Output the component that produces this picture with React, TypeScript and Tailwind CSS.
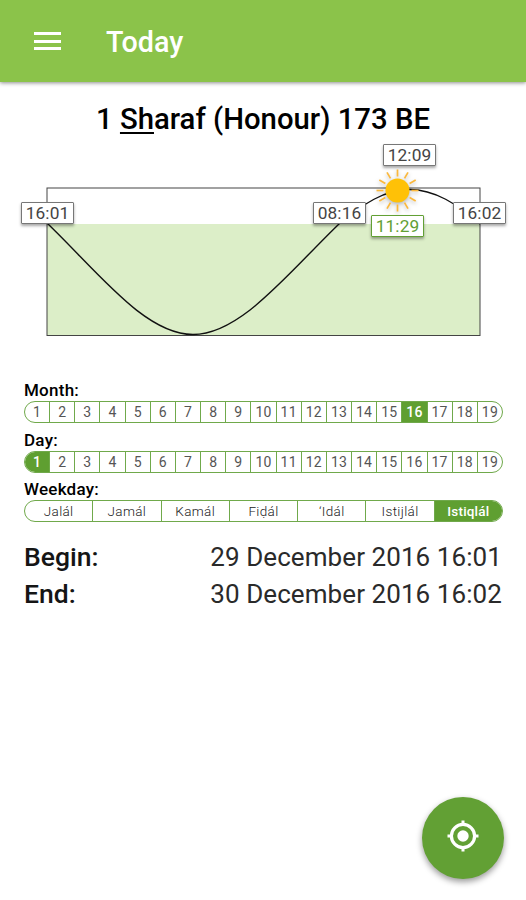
type Tone = 'dark' | 'green';

const NUMBERS = Array.from({ length: 19 }, (_, i) => String(i + 1));
const WEEKDAYS = ['Jalál', 'Jamál', 'Kamál', 'Fiḍál', '‘Idál', 'Istijlál', 'Istiqlál'];
const RAYS = Array.from({ length: 12 }, (_, i) => i * 30);

function TimeLabel({ time, place, tone = 'dark' }: { time: string; place: string; tone?: Tone }) {
  const colors = tone === 'green' ? 'border-[#62a034] text-[#62a034]' : 'border-[#777777] text-[#444444]';
  return (
    <div
      className={`absolute flex h-[22px] w-[53px] items-center justify-center rounded-[1px] border bg-white pt-px text-[17.3px] leading-none tracking-[0.1px] shadow-[0_2px_3px_rgba(0,0,0,0.35)] ${colors} ${place}`}
    >
      {time}
    </div>
  );
}

function SunChart() {
  return (
    <div className="relative h-[205px] w-full">
      <svg className="block h-[205px] w-[526px]" viewBox="0 140 526 205" fill="none">
        <rect x="47" y="224" width="433" height="111.5" fill="#dceec8" />
        <rect x="47" y="188" width="433" height="147.5" stroke="#444" strokeWidth="1" />
        <path
          d="M47.5 223.5C98 272 145 334.5 193 334.5C241 334.5 289 272 339 224C363 204 385 189.5 409 189.5C435 189.5 457 204 480 224"
          stroke="#111"
          strokeWidth="1.4"
        />
        <g className="drop-shadow-[0_2px_2px_rgba(0,0,0,0.3)]">
          {RAYS.map((angle) => (
            <path
              key={angle}
              d="M397.5 176.5V169.5"
              stroke="#fbb83b"
              strokeWidth="1.7"
              transform={`rotate(${angle} 397.5 190.5)`}
            />
          ))}
          <circle cx="397.5" cy="190.5" r="12" fill="#ffc107" />
        </g>
      </svg>
      <TimeLabel time="16:01" place="left-[21px] top-[62px]" />
      <TimeLabel time="12:09" place="left-[383px] top-[4px]" />
      <TimeLabel time="08:16" place="left-[313px] top-[62px]" />
      <TimeLabel time="11:29" place="left-[371px] top-[75px]" tone="green" />
      <TimeLabel time="16:02" place="left-[453px] top-[62px]" />
    </div>
  );
}

function Strip({ title, items, active, small }: { title: string; items: string[]; active: number; small?: boolean }) {
  return (
    <section className="h-[49.7px]">
      <h2 className="h-[21px] text-[17px] leading-[20px] font-medium tracking-[0.25px] text-black">{title}</h2>
      <ol
        className={`flex h-[22px] w-[479px] overflow-hidden rounded-full border border-[#70a94b] leading-[20px] ${
          small ? 'text-[13.5px] tracking-[0.35px]' : 'text-[14px] tracking-[0.2px]'
        }`}
      >
        {items.map((item, i) => (
          <li
            key={item}
            className={`min-w-0 flex-1 basis-0 text-center ${i > 0 ? 'border-l border-[#70a94b]' : ''} ${
              i === active
                ? small
                  ? 'bg-[#5f9f31] font-medium tracking-[0.2px] text-white'
                  : 'bg-[#5f9f31] font-medium text-white'
                : small
                  ? 'font-light text-[#222222]'
                  : 'text-[#555555]'
            }`}
          >
            {item}
          </li>
        ))}
      </ol>
    </section>
  );
}

export default function App() {
  return (
    <div className="relative flex h-[900px] w-[526px] flex-col overflow-hidden bg-white font-[Roboto,sans-serif]">
      <header className="flex h-[82px] shrink-0 items-center bg-[#8bc34a] pl-[34px] text-white shadow-[0_1px_4px_rgba(0,0,0,0.45)]">
        <div className="flex w-[27px] flex-col gap-[4.5px]">
          <span className="h-[3px] bg-white" />
          <span className="h-[3px] bg-white" />
          <span className="h-[3px] bg-white" />
        </div>
        <h1 className="pt-[2px] pl-[45px] text-[28.7px] leading-[40px] font-medium">Today</h1>
      </header>

      <h2 className="h-[58px] pt-[19px] text-center text-[29.3px] leading-[36px] font-medium text-black">
        1 <span className="underline decoration-2 underline-offset-[3px]">Sh</span>araf (Honour) 173 BE
      </h2>

      <SunChart />

      <main className="px-6 pt-[35px]">
        <Strip title="Month:" items={NUMBERS} active={15} />
        <Strip title="Day:" items={NUMBERS} active={0} />
        <Strip title="Weekday:" items={WEEKDAYS} active={6} small />
        <dl className="mt-[10px] text-[26px] leading-[36.5px] text-[#151515]">
          <div className="flex justify-between">
            <dt className="text-[26.5px] font-medium">Begin:</dt>
            <dd className="tracking-[0.08px] text-[#2a2a2a]">29 December 2016 16:01</dd>
          </div>
          <div className="flex justify-between">
            <dt className="text-[26.5px] font-medium">End:</dt>
            <dd className="tracking-[0.08px] text-[#2a2a2a]">30 December 2016 16:02</dd>
          </div>
        </dl>
      </main>

      <button className="absolute top-[797px] left-[422px] flex h-[82px] w-[82px] items-center justify-center rounded-full bg-[#62a034] shadow-[0_3px_6px_rgba(0,0,0,0.4)]">
        <svg className="h-[32px] w-[32px] -translate-y-[2px]" viewBox="0 0 32 32" fill="none">
          <circle cx="16" cy="16" r="11.6" stroke="white" strokeWidth="3.2" />
          <circle cx="16" cy="16" r="5.7" fill="white" />
          <path d="M16 0.5V4M16 28V31.5M0.5 16H4M28 16H31.5" stroke="white" strokeWidth="3" />
        </svg>
      </button>
    </div>
  );
}
